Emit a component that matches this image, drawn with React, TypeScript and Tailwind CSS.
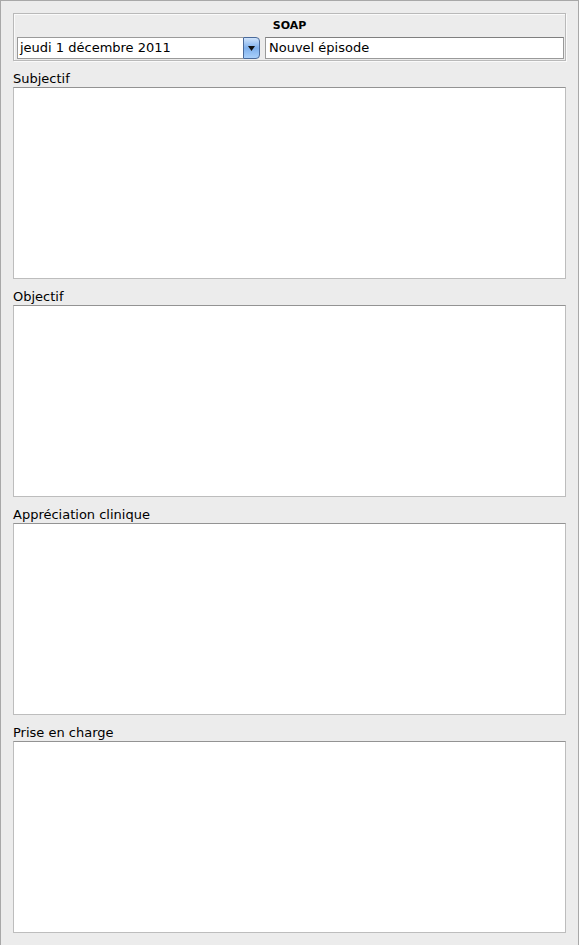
import React from "react";

const font = { fontFamily: '"Lucida Grande", "DejaVu Sans", "Liberation Sans", sans-serif' };

function Area({ label }: { label: string }) {
  return (
    <div className="flex flex-col">
      <div className="h-[26px] flex items-end text-[13px] leading-[16px] text-black">{label}</div>
      <div className="h-[192px] bg-white border border-[#bdbdbd] border-t-[#939393]" />
    </div>
  );
}

export default function App() {
  return (
    <div style={font} className="w-[579px] h-[945px] bg-[#ececec] border-l border-t border-r border-[#a8a8a8] overflow-hidden">
      <div className="pl-[12px] pr-[12px] pt-[12px]">
        <div className="h-[48px] border border-[#b9b9b9] shadow-[inset_1px_1px_0_#fafafa,1px_1px_0_#fafafa] flex flex-col">
          <div className="h-[23px] flex items-center justify-center text-[11px] font-bold text-black pt-[2px]">SOAP</div>
          <div className="flex pl-[3px] pr-[1px] gap-[5px]">
            <div className="flex h-[22px] w-[243px]">
              <div className="flex-1 bg-white border border-[#9a9a9a] border-r-0 flex items-center pl-[2px] text-[13px] text-black">
                jeudi 1 décembre 2011
              </div>
              <div className="w-[17px] h-[22px] rounded-r-[4px] border border-[#4a6a9a] bg-gradient-to-b from-[#cfe3fb] via-[#7fb0ec] to-[#a9d0fb] flex items-center justify-center">
                <svg width="7" height="5" viewBox="0 0 7 5"><path d="M0 0h7L3.5 5z" fill="#111" /></svg>
              </div>
            </div>
            <div className="flex-1 h-[22px] bg-white border border-[#9a9a9a] border-t-[#7f7f7f] flex items-center pl-[3px] text-[13px] text-black">
              Nouvel épisode
            </div>
          </div>
        </div>
        <div className="flex flex-col">
          <Area label="Subjectif" />
          <Area label="Objectif" />
          <Area label="Appréciation clinique" />
          <Area label="Prise en charge" />
        </div>
      </div>
    </div>
  );
}
